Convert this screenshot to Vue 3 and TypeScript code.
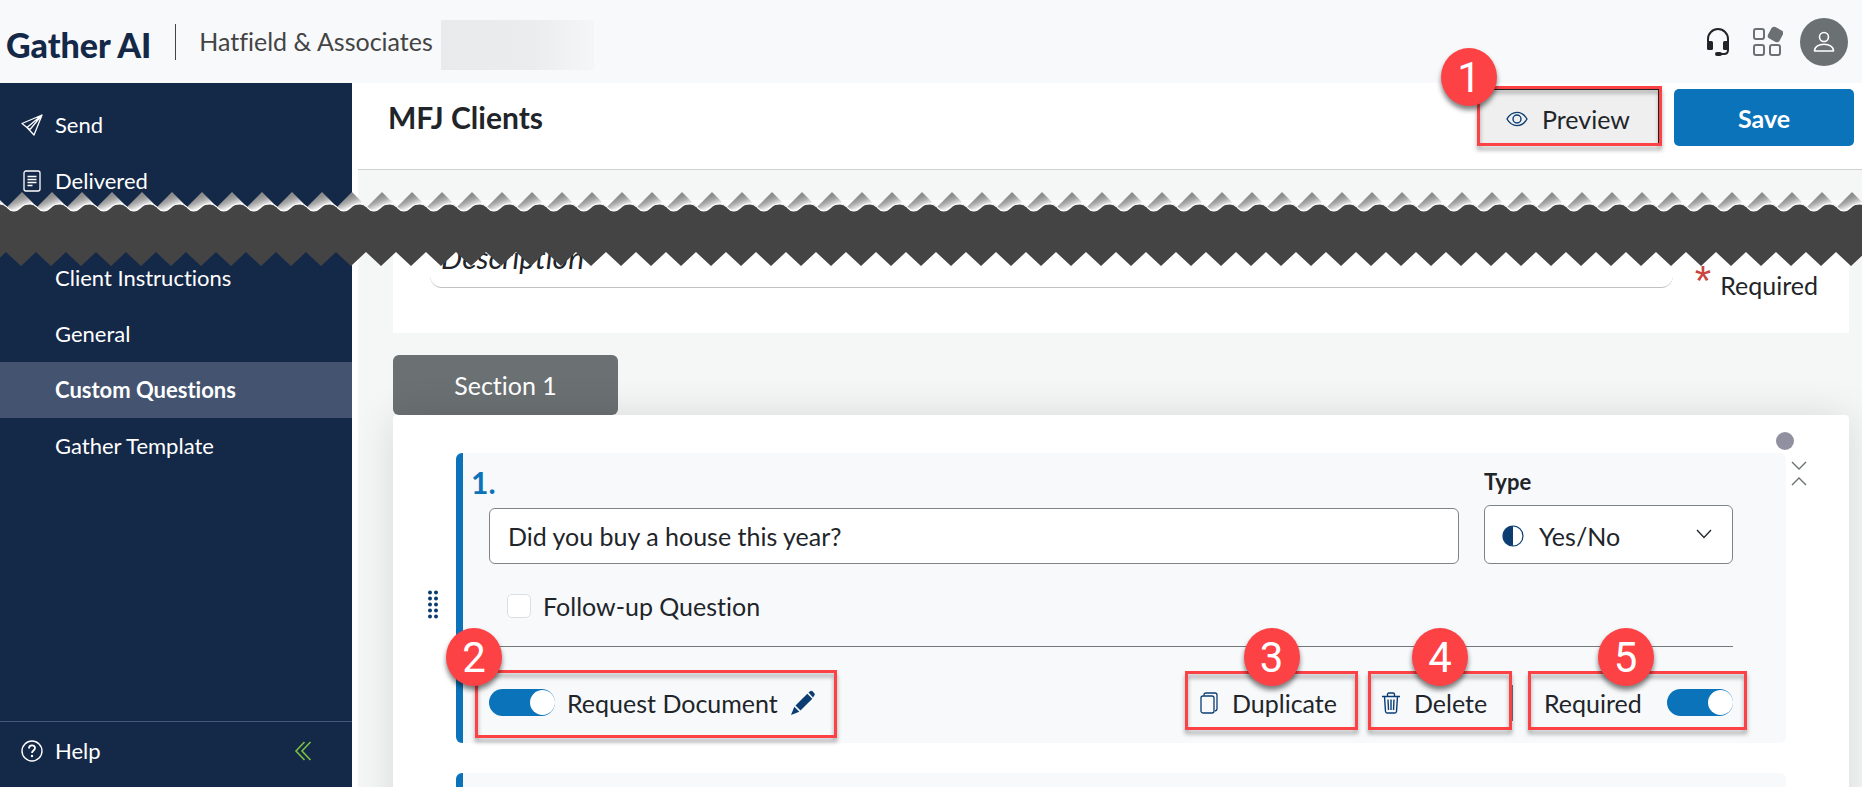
<script setup lang="ts">
import { ref } from 'vue'

interface NavItem {
  label: string
  active?: boolean
}

const settings: NavItem[] = [
  { label: 'Client Instructions' },
  { label: 'General' },
  { label: 'Custom Questions', active: true },
  { label: 'Gather Template' },
]

const description = ref('')
const question = ref('Did you buy a house this year?')
const type = ref('yesno')
const followUp = ref(false)
const requestDocument = ref(true)
const required = ref(true)
const dotRows = [2, 8, 14, 20, 26]
</script>

<template>
  <div class="page">
    <header class="topbar">
      <span class="logo">Gather AI</span>
      <span class="rule"></span>
      <span class="firm">Hatfield &amp; Associates</span>
      <span class="redacted"></span>
      <div class="tools">
        <button type="button" class="icon-btn" aria-label="Support">
          <svg width="24" height="30" viewBox="0 0 24 30" fill="none">
            <path d="M2 15V12a10 10 0 0 1 20 0v11c0 2.500-1.500 4-4 4h-6" stroke="#212529" stroke-width="2" />
            <rect x="1" y="14" width="6" height="9" rx="1.500" fill="#212529" />
            <rect x="17" y="14" width="6" height="9" rx="1.500" fill="#212529" />
            <rect x="9" y="25" width="7" height="4" rx="2" fill="#212529" />
          </svg>
        </button>
        <button type="button" class="icon-btn" aria-label="Apps">
          <svg width="31" height="31" viewBox="0 0 31 31" fill="none" stroke="#6b7073" stroke-width="2">
            <rect x="2" y="3" width="10" height="10" rx="2" />
            <rect x="2" y="19" width="10" height="10" rx="2" />
            <rect x="18" y="19" width="10" height="10" rx="2" />
            <rect x="18" y="3" width="11" height="11" rx="2" fill="#6b7073" transform="rotate(28 23.500 8.500)" />
          </svg>
        </button>
        <button type="button" class="avatar" aria-label="Account">
          <svg width="24" height="24" viewBox="0 0 24 24" fill="none" stroke="#fff" stroke-width="1.600">
            <circle cx="12" cy="7" r="4.500" />
            <path d="M2.500 21c0-9 19-9 19 0z" stroke-linejoin="round" />
          </svg>
        </button>
      </div>
    </header>

    <div class="body">
      <aside class="sidebar">
        <nav class="nav">
          <a href="#" class="item">
            <svg width="24" height="24" viewBox="0 0 24 24" fill="none" stroke="#fff" stroke-width="1.300" stroke-linejoin="round">
              <path d="M22 2L2 10.500l5 4L14 22zM22 2L7 14.500M22 2L10 16.500M7 14.500l3 2" />
            </svg>
            <span>Send</span>
          </a>
          <a href="#" class="item">
            <svg width="24" height="24" viewBox="0 0 24 24" fill="none" stroke="#fff" stroke-width="1.300">
              <rect x="4" y="2" width="16" height="20" rx="2" />
              <path d="M7.500 7.500h9M7.500 10.500h9M7.500 13.500h9M7.500 16.500h5" />
            </svg>
            <span>Delivered</span>
          </a>
          <div class="group">
            <a v-for="s in settings" :key="s.label" href="#" class="item sub" :class="{ active: s.active }">{{ s.label }}</a>
          </div>
        </nav>
        <div class="side-foot">
          <a href="#" class="help">
            <svg width="24" height="24" viewBox="0 0 24 24" fill="none" stroke="#fff" stroke-width="1.400">
              <circle cx="12" cy="12" r="10" />
              <path d="M9 9.500c0-4 6-4 6-.5 0 2.500-3 2.500-3 5" stroke-width="1.800" />
              <circle cx="12" cy="17" r="1.200" fill="#fff" stroke="none" />
            </svg>
            <span>Help</span>
          </a>
          <button type="button" class="icon-btn" aria-label="Collapse menu">
            <svg width="18" height="20" viewBox="0 0 18 20" fill="none" stroke="#7cc142" stroke-width="1.600">
              <path d="M10.500 1L2 10l8.500 9M16.500 1L8 10l8.500 9" />
            </svg>
          </button>
        </div>
      </aside>

      <main class="content">
        <div class="titlebar">
          <h1>MFJ Clients</h1>
          <div class="title-actions">
            <div class="marked preview-wrap">
              <button type="button" class="preview">
                <svg width="22" height="16" viewBox="0 0 22 16" fill="none" stroke="#0b3d73" stroke-width="1.400">
                  <path d="M1 8C6-.8 16-.8 21 8 16 16.800 6 16.800 1 8z" />
                  <circle cx="11" cy="8" r="4" />
                </svg>
                <span>Preview</span>
              </button>
              <span class="badge b1">1</span>
            </div>
            <button type="button" class="save">Save</button>
          </div>
        </div>

        <div class="canvas">
          <section class="desc-card">
            <input v-model="description" class="desc" placeholder="Description" aria-label="Description" />
            <div class="req-note"><span class="star">*</span><span>Required</span></div>
          </section>

          <div class="tab">Section 1</div>
          <section class="card">
            <div class="qrow">
              <button type="button" class="handle" aria-label="Reorder question">
                <svg width="12" height="29" viewBox="0 0 12 28" fill="#0b3d73">
                  <template v-for="y in dotRows" :key="y">
                    <circle cx="3" :cy="y" r="2" />
                    <circle cx="9" :cy="y" r="2" />
                  </template>
                </svg>
              </button>

              <div class="qblock">
                <div class="fields">
                  <div class="qfield">
                    <label class="num" for="q1">1.</label>
                    <input id="q1" v-model="question" class="qinput" />
                  </div>
                  <div class="tfield">
                    <label for="t1">Type</label>
                    <div class="select-wrap">
                      <select id="t1" v-model="type">
                        <option value="yesno">Yes/No</option>
                      </select>
                      <svg class="half" width="22" height="22" viewBox="0 0 22 22">
                        <circle cx="11" cy="11" r="10" fill="#fff" stroke="#0b3d73" stroke-width="1.200" />
                        <path d="M11 1a10 10 0 0 0 0 20z" fill="#0b3d73" />
                      </svg>
                      <svg class="chev" width="16" height="10" viewBox="0 0 16 10" fill="none" stroke="#212529" stroke-width="1.300">
                        <path d="M1 1l7 7.500L15 1" />
                      </svg>
                    </div>
                  </div>
                </div>

                <div class="follow">
                  <input id="f1" v-model="followUp" type="checkbox" class="tick" />
                  <label for="f1">Follow-up Question</label>
                </div>
                <hr />

                <div class="actions">
                  <div class="marked request">
                    <input id="r1" v-model="requestDocument" type="checkbox" role="switch" class="toggle" />
                    <label for="r1">Request Document</label>
                    <button type="button" class="icon-btn" aria-label="Edit request">
                      <svg width="26" height="26" viewBox="0 0 26 26" fill="#0b3d73">
                        <path d="M18.500 2.500l2-1.500q1-.6 2 .3l2 2.200q.8 1-.2 2L23 7.500z" />
                        <path d="M17.300 3.700l5 5L10.500 20.500l-5-5z" />
                        <path d="M4.300 16.800l5 5L1 25z" />
                      </svg>
                    </button>
                    <span class="badge b2">2</span>
                  </div>

                  <div class="right">
                    <div class="marked dup">
                      <button type="button" class="act">
                        <svg width="18" height="22" viewBox="0 0 18 22" fill="none" stroke="#0b3d73" stroke-width="1.300">
                          <rect x="1" y="4" width="13" height="17" rx="2" />
                          <path d="M4 3.500V3q0-2 2-2h9q2 0 2 2v14q0 1.500-2 2" />
                        </svg>
                        <span>Duplicate</span>
                      </button>
                      <span class="badge b3">3</span>
                    </div>
                    <div class="marked del">
                      <button type="button" class="act">
                        <svg width="18" height="22" viewBox="0 0 18 22" fill="none" stroke="#0b3d73" stroke-width="1.400">
                          <path d="M0 4.500h18M5.500 4V2.500q0-1.500 1.500-1.500h4q1.500 0 1.500 1.500V4M2.500 4.500l1 15q.2 1.500 1.500 1.500h8q1.300 0 1.500-1.500l1-15M6 7.500l.5 10.500M9 7.500V18M12 7.500L11.500 18" />
                        </svg>
                        <span>Delete</span>
                      </button>
                      <span class="badge b4">4</span>
                    </div>
                    <span class="divider"></span>
                    <div class="marked reqd">
                      <label for="rq1">Required</label>
                      <input id="rq1" v-model="required" type="checkbox" role="switch" class="toggle" />
                      <span class="badge b5">5</span>
                    </div>
                  </div>
                </div>
              </div>

              <div class="qside">
                <span class="dot"></span>
                <button type="button" class="icon-btn fold" aria-label="Collapse question">
                  <svg width="16" height="26" viewBox="0 0 16 26" fill="none" stroke="#6b7073" stroke-width="1.400">
                    <path d="M1 1l7 7 7-7M1 24l7-7 7 7" />
                  </svg>
                </button>
              </div>
            </div>

            <div class="qrow next">
              <div class="handle"></div>
              <div class="qblock"></div>
              <div class="qside"></div>
            </div>
          </section>
        </div>
      </main>
    </div>

    <svg class="tear" aria-hidden="true">
      <defs>
        <linearGradient id="curl" gradientUnits="userSpaceOnUse" x1="10" y1="4" x2="15" y2="16">
          <stop offset="0.100" stop-color="#8c8c8c" />
          <stop offset="0.450" stop-color="#a8a8a8" />
          <stop offset="1" stop-color="#ffffff" />
        </linearGradient>
        <pattern id="teeth" patternUnits="userSpaceOnUse" x="7" y="0" width="30" height="75">
          <path d="M0 15L15 0l15 15v4H0z" fill="url(#curl)" />
          <path d="M0 15C4 20 9 20 13 16S19 12 23 12 28 13 30 15V61l-1-1L14 74 0 61z" fill="#444444" />
          <path d="M0 15C4 20 9 20 13 16S19 12 23 12 28 13 30 15" fill="none" stroke="#ffffff" stroke-width="1.200" />
        </pattern>
      </defs>
      <rect width="100%" height="75" fill="url(#teeth)" />
    </svg>
  </div>
</template>

<style>
body {
  margin: 0;
}
</style>

<style scoped>
.page {
  position: relative;
  display: flex;
  flex-direction: column;
  height: 100vh;
  overflow: hidden;
  background: #fff;
  color: #212529;
  font-family: Lato, "Open Sans", sans-serif;
  font-size: 25px;
  font-variant-ligatures: no-common-ligatures;
  line-height: 30px;
}
.page * {
  box-sizing: border-box;
}
button,
input,
select {
  margin: 0;
  font: inherit;
  color: inherit;
}
button {
  border: 0;
  padding: 0;
  background: none;
  cursor: pointer;
}
svg {
  display: block;
  flex: none;
}
a {
  color: inherit;
  text-decoration: none;
}
.icon-btn {
  display: flex;
}

.topbar {
  display: flex;
  align-items: center;
  flex: none;
  height: 83px;
  padding: 0 14px 0 6px;
  background: #f8f9fb;
}
.logo {
  padding-top: 6px;
  color: #142848;
  font-size: 34px;
  font-weight: 900;
  line-height: 40px;
}
.rule {
  width: 1px;
  height: 36px;
  margin: 0 23px 0 24px;
  background: #444;
}
.firm {
  padding-bottom: 2px;
  color: #444;
}
.redacted {
  width: 153px;
  height: 50px;
  margin-left: 8px;
  margin-top: 6px;
  background: linear-gradient(90deg, #e9eaec, #ebecee 60%, #f5f6f8);
}
.tools {
  display: flex;
  align-items: center;
  gap: 22px;
  margin-left: auto;
}
.avatar {
  display: grid;
  place-items: center;
  width: 48px;
  height: 48px;
  margin-left: -5px;
  border-radius: 50%;
  background: #6b7073;
}

.body {
  display: flex;
  flex: 1;
  min-height: 0;
}
.sidebar {
  display: flex;
  flex-direction: column;
  flex: none;
  width: 352px;
  background: #142848;
  color: #fff;
  font-size: 22px;
  line-height: 28px;
}
.nav {
  padding-top: 14px;
}
.item {
  display: flex;
  align-items: center;
  gap: 11px;
  height: 56px;
  padding-left: 20px;
}
.group {
  margin-top: 41px;
}
.sub {
  padding-left: 55px;
}
.active {
  background: #445470;
  font-weight: 700;
}
.side-foot {
  display: flex;
  align-items: center;
  justify-content: space-between;
  height: 66px;
  margin-top: auto;
  padding: 0 40px 8px 20px;
  border-top: 1px solid #445a7c;
}
.help {
  display: flex;
  align-items: center;
  gap: 11px;
}

.content {
  display: flex;
  flex-direction: column;
  flex: 1;
  min-width: 0;
  margin-left: 6px;
}
.titlebar {
  display: flex;
  justify-content: space-between;
  flex: none;
  height: 87px;
  padding: 3px 8px 0 30px;
  border-bottom: 1px solid #d0d1d1;
}
h1 {
  margin: 0;
  padding-top: 13px;
  font-size: 30px;
  font-weight: 700;
  line-height: 36px;
}
.title-actions {
  display: flex;
  align-items: flex-end;
  align-self: flex-start;
  gap: 12px;
}
.marked {
  position: relative;
  display: flex;
  align-items: center;
}
.marked::after {
  content: "";
  position: absolute;
  inset: 0;
  border: 3px solid #fd4246;
  filter: drop-shadow(0 4px 2px rgba(0, 0, 0, 0.35));
  pointer-events: none;
}
.badge {
  position: absolute;
  z-index: 1;
  width: 56px;
  height: 58px;
  border-radius: 50%;
  background: #fd4246;
  box-shadow: 0 4px 5px rgba(0, 0, 0, 0.5);
  color: #fff;
  font-family: Roboto, "Liberation Sans", sans-serif;
  font-size: 42px;
  line-height: 60px;
  text-align: center;
}
.b1 {
  left: -36px;
  top: -38px;
}
.b2 {
  left: -29px;
  top: -42px;
}
.b3,
.b4 {
  left: calc(50% - 28px);
  top: -43px;
}
.b5 {
  left: calc(50% - 40px);
  top: -43px;
}
.preview-wrap {
  width: 185px;
  height: 60px;
  padding: 3px;
}
.preview {
  display: flex;
  align-items: center;
  gap: 14px;
  width: 100%;
  height: 100%;
  padding: 4px 0 0 26px;
  border: 0 solid #212529;
  border-width: 1px 1px 0 0;
  background: #efefef;
}
.save {
  width: 180px;
  height: 57px;
  border-radius: 5px;
  background: #0a73ba;
  color: #fff;
  font-weight: 700;
}

.canvas {
  flex: 1;
  padding: 30px 13px 0 35px;
  background: #f4f7f6;
}
.desc-card {
  display: flex;
  align-items: flex-start;
  gap: 22px;
  height: 133px;
  padding: 36px 31px 0 37px;
  background: #fff;
}
.desc {
  flex: 1;
  min-width: 0;
  height: 52px;
  padding: 0 11px 10px;
  border: 0;
  border-bottom: 1px solid #bfc1c3;
  border-radius: 12px;
  background: #fff;
  font-size: 30px;
}
.desc::placeholder {
  color: #212529;
  font-style: italic;
  opacity: 1;
}
.req-note {
  display: flex;
  align-items: baseline;
  gap: 9px;
  padding-top: 30px;
}
.star {
  color: #cb4540;
  font-family: "Liberation Sans", Arial, sans-serif;
  font-size: 42px;
}
.tab {
  width: 225px;
  height: 60px;
  margin-top: 22px;
  border-radius: 6px;
  background: #6b7073;
  color: #fff;
  line-height: 60px;
  text-align: center;
}
.card {
  min-height: 600px;
  padding-top: 38px;
  border-radius: 4px;
  background: #fff;
  box-shadow: 0 0 40px rgba(0, 0, 0, 0.12);
}
.tab,
.card {
  position: relative;
}
.qrow {
  display: flex;
}
.next {
  margin-top: 30px;
}
.next .qblock {
  height: 200px;
}
.handle {
  display: flex;
  align-items: center;
  justify-content: flex-end;
  flex: none;
  width: 63px;
  padding: 12px 17px 0 0;
}
.qblock {
  flex: 1;
  min-width: 0;
  padding: 14px 53px 5px 26px;
  border-left: 7px solid #0a73ba;
  border-radius: 6px;
  background: #f8f9fb;
}
.fields {
  display: flex;
  align-items: flex-end;
  gap: 25px;
}
.qfield {
  flex: 1;
  min-width: 0;
}
.num {
  display: block;
  margin: 0 0 11px -18px;
  color: #0a73ba;
  font-size: 30px;
  font-weight: 700;
}
.qinput {
  display: block;
  width: 100%;
  height: 56px;
  padding: 0 18px;
  border: 1px solid #7f8489;
  border-radius: 6px;
  background: #fff;
}
.tfield {
  width: 249px;
}
.tfield label {
  display: block;
  margin-bottom: 11px;
  font-size: 22px;
  font-weight: 700;
  line-height: 24px;
}
.select-wrap {
  position: relative;
}
select {
  display: block;
  width: 100%;
  height: 59px;
  padding: 2px 54px 0;
  border: 1px solid #7f8489;
  border-radius: 6px;
  background: #fff;
  appearance: none;
}
.half,
.chev {
  position: absolute;
  pointer-events: none;
}
.half {
  left: 18px;
  top: 20px;
}
.chev {
  right: 21px;
  top: 24px;
}
.follow {
  display: flex;
  align-items: center;
  gap: 12px;
  height: 40px;
  margin-top: 22px;
  padding-left: 18px;
}
.tick {
  width: 24px;
  height: 24px;
  border: 1px solid #dcdfe2;
  border-radius: 5px;
  background: #fff;
  appearance: none;
}
hr {
  height: 1px;
  margin: 20px 0 23px;
  border: 0;
  background: #76797c;
}
.actions {
  display: flex;
  align-items: flex-start;
  justify-content: space-between;
  margin: 0 -14px;
}
.request {
  width: 362px;
  height: 68px;
  padding: 0 0 3px 14px;
}
.request label {
  margin: 0 12px;
}
.toggle {
  display: flex;
  align-items: center;
  justify-content: flex-start;
  width: 66px;
  height: 27px;
  border-radius: 14px;
  background: #8a9095;
  appearance: none;
}
.toggle::before {
  content: "";
  width: 25px;
  height: 25px;
  margin: 1px;
  border-radius: 50%;
  background: #fff;
}
.toggle:checked {
  justify-content: flex-end;
  background: #0a73ba;
}
.toggle:checked::before {
  margin: 0;
}
.right {
  display: flex;
  padding-top: 1px;
}
.right .marked {
  height: 59px;
  padding-top: 4px;
}
.act {
  display: flex;
  align-items: center;
  gap: 14px;
}
.right .dup {
  width: 173px;
  padding-left: 15px;
}
.right .del {
  width: 144px;
  margin-left: 10px;
  padding-left: 14px;
}
.divider {
  width: 1px;
  height: 36px;
  margin: 14px 15px 0 0;
  background: #6b7073;
}
.right .reqd {
  justify-content: space-between;
  width: 219px;
  padding-left: 16px;
  padding-right: 14px;
}
.qside {
  position: relative;
  flex: none;
  width: 63px;
  padding: 8px 0 0 5px;
}
.dot {
  position: absolute;
  left: -10px;
  top: -21px;
  width: 18px;
  height: 18px;
  border-radius: 50%;
  background: #9190a0;
}

.tear {
  position: absolute;
  z-index: 2;
  left: 0;
  top: 192px;
  width: 100%;
  height: 75px;
  pointer-events: none;
}
</style>
